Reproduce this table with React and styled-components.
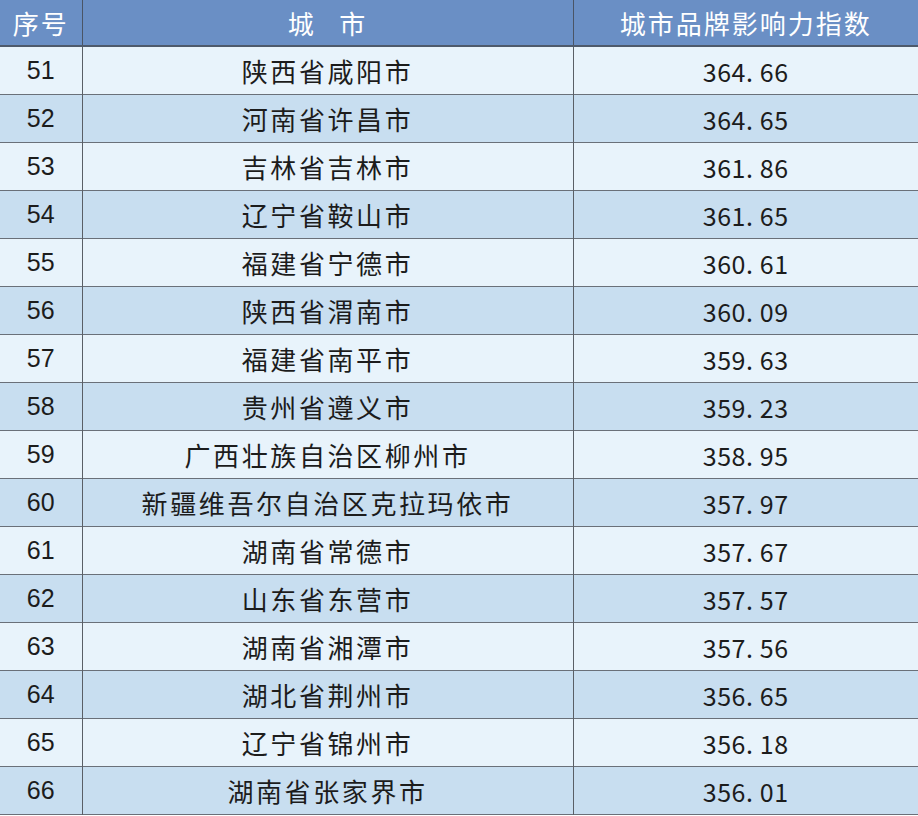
import styled, { createGlobalStyle } from "styled-components";

const GlobalStyle = createGlobalStyle`
    body {
        margin: 0;
        background: #ffffff;
        font-family: "Noto Sans CJK SC", "Noto Sans", sans-serif;
    }
`

const rows = [
    [51, "陕西省咸阳市", "364.66"],
    [52, "河南省许昌市", "364.65"],
    [53, "吉林省吉林市", "361.86"],
    [54, "辽宁省鞍山市", "361.65"],
    [55, "福建省宁德市", "360.61"],
    [56, "陕西省渭南市", "360.09"],
    [57, "福建省南平市", "359.63"],
    [58, "贵州省遵义市", "359.23"],
    [59, "广西壮族自治区柳州市", "358.95"],
    [60, "新疆维吾尔自治区克拉玛依市", "357.97"],
    [61, "湖南省常德市", "357.67"],
    [62, "山东省东营市", "357.57"],
    [63, "湖南省湘潭市", "357.56"],
    [64, "湖北省荆州市", "356.65"],
    [65, "辽宁省锦州市", "356.18"],
    [66, "湖南省张家界市", "356.01"],
]

const App = () => {
    return (
        <>
            <GlobalStyle />
            <Table>
                <colgroup>
                    <col style={{ width: 82 }} />
                    <col style={{ width: 491 }} />
                    <col />
                </colgroup>
                <thead>
                    <tr>
                        <HeadCell>序号</HeadCell>
                        <HeadCell>城&nbsp;&nbsp;&nbsp;市</HeadCell>
                        <HeadCell>城市品牌影响力指数</HeadCell>
                    </tr>
                </thead>
                <tbody>
                    {rows.map(([rank, city, score], i) => (
                        <Row key={rank} $alt={i % 2 === 1}>
                            <NumCell>{rank}</NumCell>
                            <Cell>{city}</Cell>
                            <ScoreCell>{score.replace(".", ". ")}</ScoreCell>
                        </Row>
                    ))}
                </tbody>
            </Table>
        </>
    )
}

export default App;

const Table = styled.table`
    width: 918px;
    border-collapse: collapse;
    table-layout: fixed;
`

const HeadCell = styled.th`
    height: 45px;
    padding: 0;
    background: #6a8fc5;
    color: #ffffff;
    font-weight: 400;
    font-size: 26px;
    letter-spacing: 2px;
    text-align: center;
    border-left: 1.5px solid #4a5566;
    border-bottom: 2px solid #4e5a6c;
    &:first-child {
        border-left: none;
    }
`

const Row = styled.tr`
    background: ${p => (p.$alt ? "#c8def0" : "#e8f3fb")};
    border-bottom: 1.5px solid #6a7079;
`

const Cell = styled.td`
    height: 47px;
    padding: 0;
    text-align: center;
    color: #1c1c1c;
    font-size: 26px;
    letter-spacing: 2.6px;
    border-left: 1.5px solid #5a5f66;
    &:first-child {
        border-left: none;
    }
`

const NumCell = styled(Cell)`
    font-family: "Liberation Sans", sans-serif;
    font-size: 25px;
    letter-spacing: 0;
`

const ScoreCell = styled(Cell)`
    font-size: 25px;
    letter-spacing: 0.6px;
    white-space: pre;
`
